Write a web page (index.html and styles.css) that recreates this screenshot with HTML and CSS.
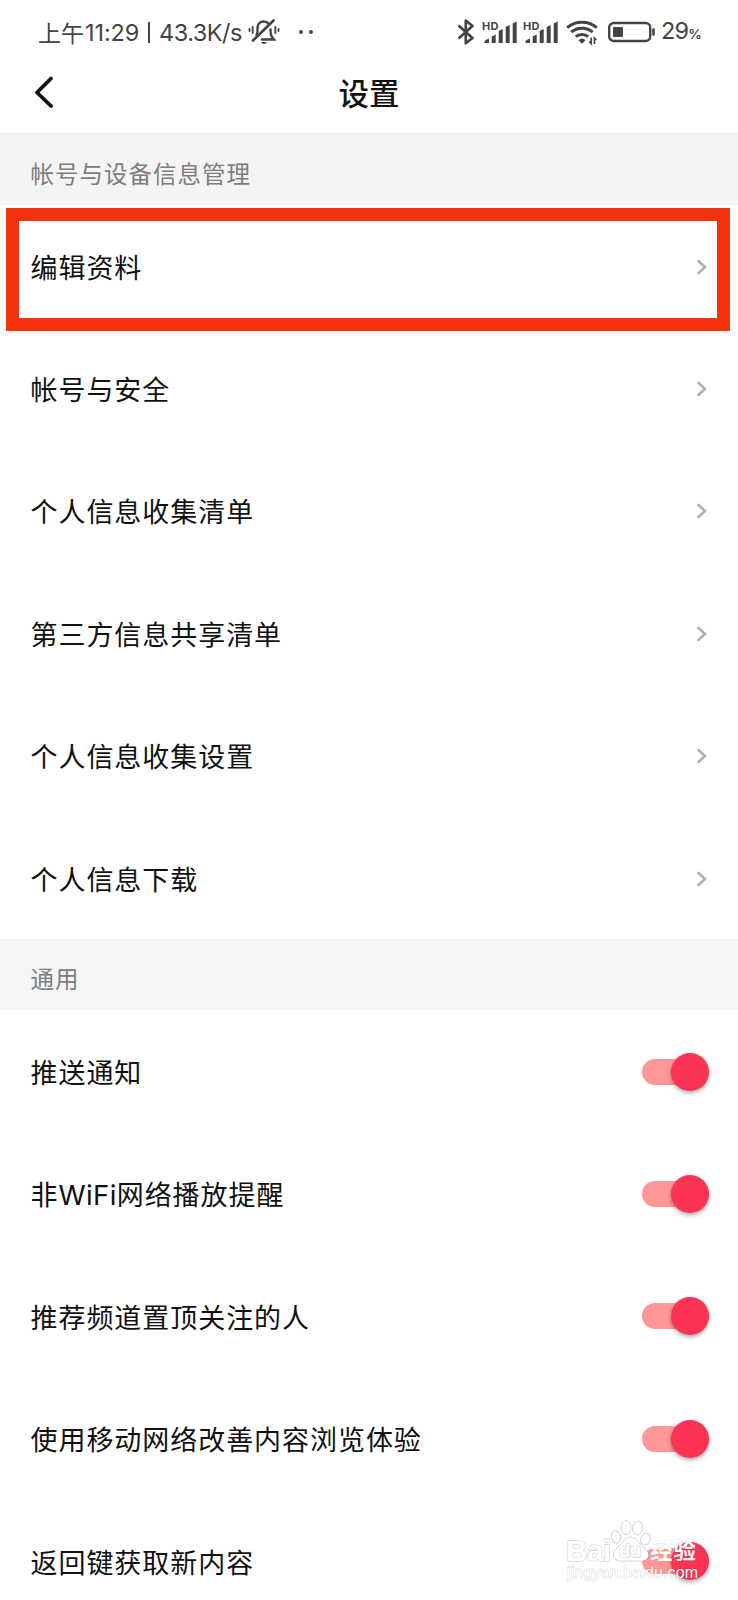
FILE: index.html
```
<!DOCTYPE html>
<html lang="zh-CN">
<head>
    <meta charset="UTF-8">
    <meta name="viewport" content="width=device-width, initial-scale=1.0">
    <title>设置</title>
    <link rel="stylesheet" href="styles.css">
</head>
<body>
    <div class="page">
        <div class="status-bar">
            <div class="status-left">
                <span class="ampm">上午</span>
                <span class="time">11:29</span>
                <span class="divider"></span>
                <span class="speed">43.3K/s</span>
                <svg class="bell" width="32" height="28" viewBox="0 0 32 28" fill="none" stroke="#444" stroke-width="2.4" stroke-linecap="round">
                    <path d="M8.500 17c1.500-2 1-4 1-7 0-4 2.500-6.500 6-6.500 2 0 3.500.7 4.500 1.500M22.500 11.500c0 5 .5 6.500 3.500 10H14"/>
                    <path d="M5 22.500L25.500 2.500" stroke-width="2.700"/>
                    <path d="M13 24h6q-1 2-3 2t-3-2z" fill="#444" stroke="none"/>
                    <path d="M4.700 9v6M1.500 11v2M27.300 9v6M30.500 11v2" stroke-width="1.900"/>
                </svg>
                <span class="dots"><i></i><i></i></span>
            </div>
            <div class="status-right">
                <svg class="bluetooth" width="18" height="26" viewBox="0 0 18 26" fill="none" stroke="#444" stroke-width="2.700" stroke-linejoin="round">
                    <path d="M1.500 6.500L15.500 19 8.800 24.300V1.500L15.500 7 1.500 19.500"/>
                </svg>
                <svg class="signal" width="36" height="26" viewBox="0 0 36 26">
                    <text x="0" y="10.500" textLength="16.500">HD</text>
                    <path d="M2.500 24v-2q2-2 4.500-2.500V24zM9.700 24v-6.500l4-2V24zM16.700 24V12l4-2V24zM23.700 24V8l4-2V24zM30.700 24V4.500l4-2V24z"/>
                </svg>
                <svg class="signal" width="36" height="26" viewBox="0 0 36 26">
                    <text x="0" y="10.500" textLength="16.500">HD</text>
                    <path d="M2.500 24v-2q2-2 4.500-2.500V24zM9.700 24v-6.500l4-2V24zM16.700 24V12l4-2V24zM23.700 24V8l4-2V24zM30.700 24V4.500l4-2V24z"/>
                </svg>
                <svg class="wifi" width="32" height="26" viewBox="0 0 32 26" fill="none" stroke="#444" stroke-width="3">
                    <path d="M1.200 8.700C9.500 1.300 22.500 1.300 30.800 8.700M5.300 13.200c6-5.300 15.400-5.300 21.400 0M9.700 17.700c3.500-3 9.100-3 12.600 0"/>
                    <path d="M12.500 21.300q3.500-3.500 7 0L16 24.800z" fill="#444" stroke="none"/>
                    <path d="M25.200 18.500v6l-2-2M28.500 25v-6l2 2" stroke-width="1.700"/>
                </svg>
                <svg class="battery" width="48" height="22" viewBox="0 0 48 22">
                    <rect x="1.200" y="2" width="41" height="18" rx="4.500" fill="none" stroke="#444" stroke-width="2.400"/>
                    <rect x="5" y="6" width="10" height="10" rx="1" fill="#444"/>
                    <path d="M45.500 8.500v5" stroke="#444" stroke-width="2.600" stroke-linecap="round"/>
                </svg>
                <span class="percent">29<small>%</small></span>
            </div>
        </div>

        <div class="header">
            <svg class="back" width="20" height="33" viewBox="0 0 20 33" fill="none" stroke="#111" stroke-width="3.800" stroke-linecap="round" stroke-linejoin="round">
                <path d="M17 2.500L3 16.500l14 13.500"/>
            </svg>
            <h1>设置</h1>
        </div>

        <h2 class="section-title first">帐号与设备信息管理</h2>
        <div class="list">
            <div class="row">
                <span>编辑资料</span>
                <svg class="chevron" viewBox="0 0 10 16"><path d="M1.500 2l6.500 6-6.500 6"/></svg>
                <div class="highlight"></div>
            </div>
            <div class="row">
                <span>帐号与安全</span>
                <svg class="chevron" viewBox="0 0 10 16"><path d="M1.500 2l6.500 6-6.500 6"/></svg>
            </div>
            <div class="row">
                <span>个人信息收集清单</span>
                <svg class="chevron" viewBox="0 0 10 16"><path d="M1.500 2l6.500 6-6.500 6"/></svg>
            </div>
            <div class="row">
                <span>第三方信息共享清单</span>
                <svg class="chevron" viewBox="0 0 10 16"><path d="M1.500 2l6.500 6-6.500 6"/></svg>
            </div>
            <div class="row">
                <span>个人信息收集设置</span>
                <svg class="chevron" viewBox="0 0 10 16"><path d="M1.500 2l6.500 6-6.500 6"/></svg>
            </div>
            <div class="row">
                <span>个人信息下载</span>
                <svg class="chevron" viewBox="0 0 10 16"><path d="M1.500 2l6.500 6-6.500 6"/></svg>
            </div>
        </div>

        <h2 class="section-title">通用</h2>
        <div class="list">
            <div class="row">
                <span>推送通知</span>
                <div class="toggle"><div class="thumb"></div></div>
            </div>
            <div class="row">
                <span>非<b class="latin">WiFi</b>网络播放提醒</span>
                <div class="toggle"><div class="thumb"></div></div>
            </div>
            <div class="row">
                <span>推荐频道置顶关注的人</span>
                <div class="toggle"><div class="thumb"></div></div>
            </div>
            <div class="row">
                <span>使用移动网络改善内容浏览体验</span>
                <div class="toggle"><div class="thumb"></div></div>
            </div>
            <div class="row">
                <span>返回键获取新内容</span>
                <div class="toggle"><div class="thumb"></div></div>
            </div>
        </div>

        <!-- watermark over the bottom right corner -->
        <svg class="watermark" width="140" height="70" viewBox="0 0 140 70">
            <ellipse cx="50" cy="22" rx="4.700" ry="6.200" transform="rotate(-15 50 22)"/>
            <ellipse cx="60" cy="12.500" rx="5" ry="7"/>
            <ellipse cx="71.500" cy="13" rx="5" ry="7" transform="rotate(10 71.500 13)"/>
            <ellipse cx="79.500" cy="24" rx="4.700" ry="6.200" transform="rotate(20 79.500 24)"/>
            <path d="M65 22c6 0 7 6 12 10 6 4 7 8 4 12-3 3-7 2-16 2s-13 1-16-2c-3-4-2-8 3-12 5-4 7-10 13-10z"/>
            <text class="wm-bai" x="0" y="46" textLength="45">Bai</text>
            <text class="wm-du" x="53" y="42" textLength="22">du</text>
            <text class="wm-cn" x="84" y="44" textLength="46">经验</text>
            <text class="wm-url" x="1" y="63" textLength="131">jingyan.baidu.com</text>
        </svg>
    </div>
</body>
</html>
```
FILE: styles.css
```
* {
    box-sizing: border-box;
}

body {
    margin: 0;
    background-color: #fff;
    color: #111;
    font-family: "Noto Sans CJK SC", sans-serif;
}

.page {
    position: relative;
    height: 1600px;
    overflow: hidden;
}

/* status bar */
.status-bar {
    display: flex;
    justify-content: space-between;
    height: 64px;
    padding: 0 37px 0 38px;
    color: #444;
}

.status-left,
.status-right {
    display: flex;
    align-items: center;
    height: 64px;
    line-height: 32px;
    white-space: nowrap;
}

.ampm {
    width: 47px;
    font-size: 23px;
}

.time,
.speed,
.percent {
    font-family: Inter, sans-serif;
    font-size: 23.5px;
    padding-top: 1px;
}

.time {
    width: 55px;
    letter-spacing: -0.1px;
}

.divider {
    width: 2px;
    height: 21px;
    margin: 0 9px 0 8px;
    background-color: #444;
}

.speed {
    width: 87px;
    letter-spacing: -0.5px;
}

.bell {
    margin-left: 2px;
}

.dots {
    display: flex;
    gap: 6px;
    margin-left: 19px;
}

.dots i {
    width: 4px;
    height: 4px;
    border-radius: 50%;
    background-color: #444;
}

.bluetooth {
    margin-right: 2px;
}

.signal {
    margin-left: 5px;
    fill: #444;
}

.signal text {
    font: 700 11px Inter, sans-serif;
}

.wifi {
    margin-left: 7px;
}

.battery {
    margin-left: 10px;
}

.percent {
    width: 40px;
    margin-left: 5px;
    letter-spacing: -0.8px;
}

.percent small {
    font-size: 13.5px;
    font-weight: 600;
}

/* title bar */
.header {
    display: grid;
    grid-template-columns: 34px 1fr 34px;
    align-items: center;
    height: 69px;
    padding: 0 34px 12px;
}

.header h1 {
    margin: 0 0 2px;
    font-size: 30.5px;
    font-weight: 500;
    line-height: 40px;
    text-align: center;
}

.section-title {
    display: flex;
    align-items: center;
    height: 71px;
    margin: 0;
    padding: 7px 30.5px 0;
    background-color: #f4f5f6;
    color: #7c7d7f;
    font-size: 23.5px;
    font-weight: 400;
    letter-spacing: 1px;
}

.section-title.first {
    height: 72px;
    padding-top: 6px;
    border-top: 1px solid #ececec;
    background-color: #f4f4f4;
}

/* rows */
.row {
    position: relative;
    display: flex;
    justify-content: space-between;
    align-items: center;
    height: 122.4px;
    padding: 0 29px 0 30.5px;
    font-size: 27px;
    letter-spacing: 0.95px;
}

.latin {
    font-family: Inter, sans-serif;
    font-size: 27.5px;
    font-weight: 400;
    letter-spacing: 0.4px;
}

.chevron {
    width: 10px;
    height: 16px;
    margin: 1px 2.5px 0 0;
    fill: none;
    stroke: #b0b0b0;
    stroke-width: 2.6;
    stroke-linecap: round;
}

.highlight {
    position: absolute;
    top: 3px;
    left: 6px;
    width: 724px;
    height: 123px;
    border: 13px solid #f5330f;
}

.toggle {
    display: flex;
    align-items: center;
    justify-content: flex-end;
    width: 67px;
    height: 26px;
    border-radius: 13px;
    background-color: #ff9797;
}

.thumb {
    flex: none;
    width: 38px;
    height: 38px;
    border-radius: 50%;
    background-color: #fb3355;
    box-shadow: 0 2px 4px rgba(0, 0, 0, 0.35);
}

/* watermark */
.watermark {
    position: absolute;
    left: 566px;
    top: 1515px;
    fill: #fff;
    stroke: rgba(0, 0, 0, 0.16);
    stroke-width: 1;
    overflow: visible;
}

.watermark text {
    font-family: "Liberation Sans", sans-serif;
    paint-order: stroke;
    stroke-width: 1.6;
}

.watermark .wm-bai {
    font-size: 30px;
    font-weight: 700;
}

.watermark .wm-du {
    font-size: 19px;
    font-weight: 700;
}

.watermark .wm-cn {
    font-family: "Noto Sans CJK SC", sans-serif;
    font-size: 22.5px;
    font-weight: 700;
    stroke: rgba(0, 0, 0, 0.08);
}

.watermark .wm-url {
    font-size: 16px;
    stroke-width: 1.2;
}
```
